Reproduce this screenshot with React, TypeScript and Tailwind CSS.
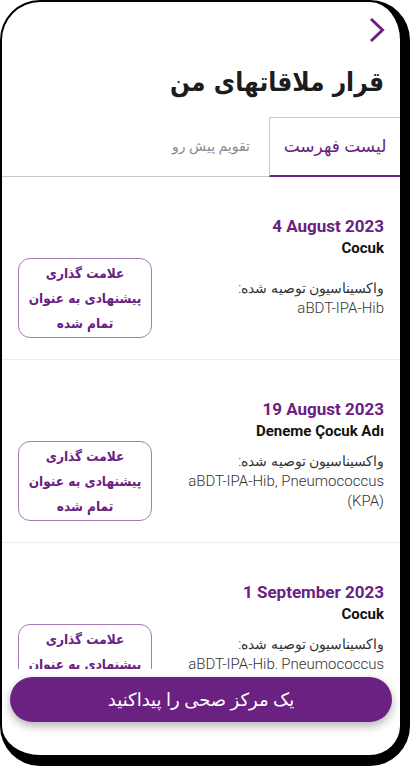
import React from "react";

type Visit = {
  date: string;
  child: string;
  vaccines: string;
};

const visits: Visit[] = [
  { date: "4 August 2023", child: "Cocuk", vaccines: "aBDT-IPA-Hib" },
  {
    date: "19 August 2023",
    child: "Deneme Çocuk Adı",
    vaccines: "aBDT-IPA-Hib, Pneumococcus (KPA)",
  },
  {
    date: "1 September 2023",
    child: "Cocuk",
    vaccines: "aBDT-IPA-Hib, Pneumococcus (KPA)",
  },
];

function VisitRow({ visit }: { visit: Visit }) {
  return (
    <div className="border-b border-[#ececec] px-4 pt-[37px] pb-[21px]">
      <div
        dir="ltr"
        className="text-right text-[17px] leading-[24px] font-bold text-[#6b2181]"
      >
        {visit.date}
      </div>
      <div
        dir="ltr"
        className="text-right text-[15px] leading-[20px] font-bold text-[#111]"
      >
        {visit.child}
      </div>
      <div className="flex items-center justify-between gap-4">
        <div className="flex-1 text-[15px] leading-[20px] font-light text-[#333]">
          <div className="text-[14px]">واکسیناسیون توصیه شده:</div>
          <div dir="ltr" className="text-right">
            {visit.vaccines}
          </div>
        </div>
        <button className="flex h-[80px] w-[134px] shrink-0 flex-col items-center justify-center rounded-xl border border-[#a77bb8] text-center font-['DejaVu_Sans_Condensed','DejaVu_Sans',sans-serif] text-[13.5px] leading-[25px] font-bold text-[#6b2181]">
          <span>علامت گذاری</span>
          <span>پیشنهادی به عنوان</span>
          <span>تمام شده</span>
        </button>
      </div>
    </div>
  );
}

export default function App() {
  return (
    <div className="h-[766px] w-[410px] bg-white">
      <div
        dir="rtl"
        className="flex h-[766px] w-[410px] flex-col overflow-hidden rounded-[40px] border-t-2 border-r-[10px] border-b-[11px] border-l-2 border-black bg-white font-['Roboto','DejaVu_Sans',sans-serif]"
      >
        <div className="flex h-[44px] shrink-0 justify-start pt-[15px] pr-[15px]">
          <svg width="16" height="26" viewBox="0 0 16 26" fill="none">
            <path
              d="M2 2 L13.5 13 L2 24"
              stroke="#6b2181"
              strokeWidth="3"
            />
          </svg>
        </div>

        <h1 className="mt-[16px] shrink-0 px-4 font-['DejaVu_Sans_Condensed','DejaVu_Sans',sans-serif] text-[26px] leading-[40px] font-bold text-[#1c1c1c]">
          قرار ملاقاتهای من
        </h1>

        <div className="mt-[15px] flex h-[60px] shrink-0 border-b border-[#c8c8c8]">
          <div className="-mb-px flex w-[131px] items-center justify-center border-t border-l border-b-2 border-[#c8c8c8] border-b-[#6b2181] text-[17px] font-medium text-[#6b2181]">
            لیست فهرست
          </div>
          <div className="flex w-[116px] items-center justify-center text-[14px] text-[#8a8a8a]">
            تقویم پیش رو
          </div>
        </div>

        <div className="min-h-0 flex-1 overflow-hidden">
          {visits.map((v, i) => (
            <VisitRow key={i} visit={v} />
          ))}
        </div>

        <div className="h-[86px] shrink-0 px-2 pt-2">
          <button className="h-[45px] w-full rounded-full bg-[#6b2181] text-[18px] text-white shadow-[0_4px_10px_rgba(0,0,0,0.3)]">
            یک مرکز صحی را پیداکنید
          </button>
        </div>
      </div>
    </div>
  );
}
